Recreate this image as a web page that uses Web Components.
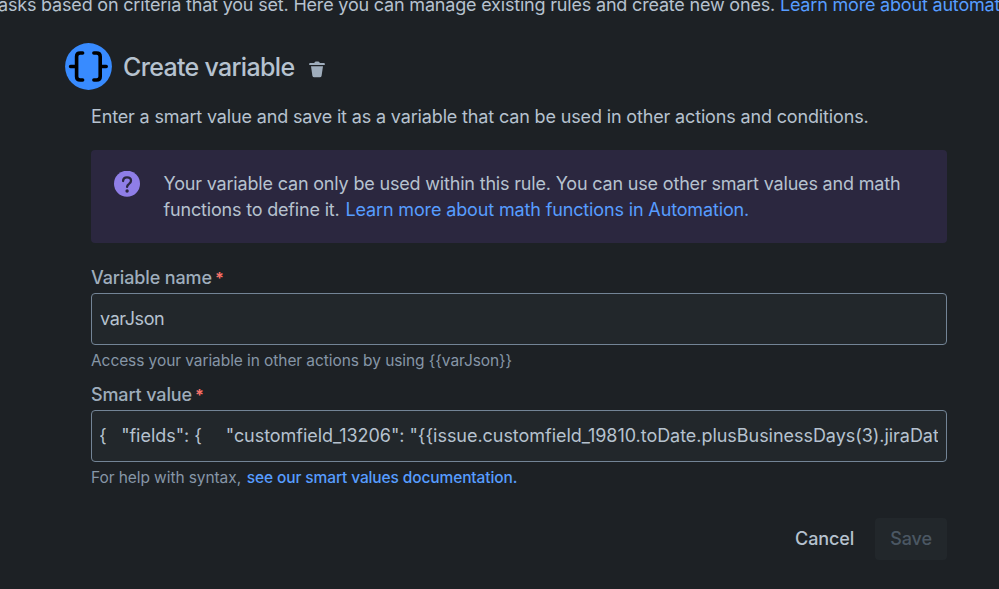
<!DOCTYPE html>
<html lang="en"><head><meta charset="utf-8"><title>Create variable</title>
<style>
html,body{margin:0;height:100%;overflow:hidden;background:#1d2125}
body{font:400 18px/26px Inter,"Noto Sans",sans-serif;color:#b6c2cf;letter-spacing:-.15px}
</style></head><body>
<automation-page></automation-page>
<script>
const define=(name,html,setup)=>customElements.define(name,class extends HTMLElement{
  connectedCallback(){
    if(this.shadowRoot)return;
    const t=document.createElement('template');t.innerHTML=html;
    const root=this.attachShadow({mode:'open'});root.append(t.content.cloneNode(true));
    if(setup)setup(this,root);
  }
});

define('text-link',`<style>:host{display:inline;color:#579dff}a{color:inherit;text-decoration:none}</style><a href="#"><slot></slot></a>`);

define('variable-icon',`<style>:host{display:block;width:47px;height:47px;flex:none}svg{display:block}</style>
<svg width="47" height="47" viewBox="0 0 47 47"><circle cx="23.5" cy="23.5" r="23.4" fill="#388bff"/>
<g fill="none" stroke="#000" stroke-width="3.6" stroke-linecap="round" stroke-linejoin="round"><path d="M17.6 10H15.2Q11.6 10 11.6 13.6V33.4Q11.6 37 15.2 37H17.6M5.6 23.5H11.6"/><path d="M28.9 10H31.6Q35.2 10 35.2 13.6V33.4Q35.2 37 31.6 37H28.9M35.2 23.5H41.2"/></g></svg>`);

define('trash-button',`<style>:host{display:block;width:16px;height:17px}button{all:unset;display:block}svg{display:block}</style>
<button aria-label="Delete"><svg width="16" height="17" viewBox="0 0 16 17" fill="#9fadbc"><path d="M1.1 2H5.3Q5.6.5 6.8.5H9.3Q10.5.5 10.8 2H15Q15.8 2 15.8 2.8V4H.2V2.8Q.2 2 1.1 2Z"/><path d="M2 5.3H14L12.6 14.8Q12.3 16.3 10.8 16.3H5.2Q3.7 16.3 3.4 14.8Z"/></svg></button>`);

define('rule-heading',`<style>:host{display:flex;align-items:center;height:47px}
h1{margin:1px 0 0 11px;font-size:25px;line-height:30px;font-weight:550;letter-spacing:-.68px;white-space:nowrap}
trash-button{margin:6px 0 0 15px}</style>
<variable-icon></variable-icon><h1><slot></slot></h1><trash-button></trash-button>`);

define('info-banner',`<style>:host{display:flex;box-sizing:border-box;height:93px;padding:21px 23px;border-radius:4px;background:#2b273f}
svg{flex:none;width:26px;height:26px;margin-right:23.5px}div{flex:1;letter-spacing:-.18px;white-space:nowrap}</style>
<svg viewBox="0 0 26 26"><circle cx="13" cy="12.7" r="13" fill="#8f7ee7"/><path d="M9.1 10.1Q9.1 6.3 13 6.3Q17 6.3 17 9.8Q17 11.6 15 12.9Q13.1 14 13.1 15.9" fill="none" stroke="#2b273f" stroke-width="2.3" stroke-linecap="round"/><circle cx="13.1" cy="20" r="1.7" fill="#2b273f"/></svg><div><slot></slot></div>`);

define('form-field',`<style>:host{display:block}
label{display:block;height:29px;font-weight:500;color:#9fadbc;line-height:27px;letter-spacing:-.13px}
i{font-style:normal;font-weight:700;font-size:16px;color:#f87168;margin-left:3px}
.box{box-sizing:border-box;height:52px;border:1.3px solid #738496;border-radius:4px;background:#22272b;padding:0 8px;overflow:hidden}
.value{line-height:50px;overflow:hidden;white-space:pre;letter-spacing:-.04px}
.help{height:20px;margin-top:6px;font-size:15.5px;line-height:20px;color:#8696a7;letter-spacing:-.08px}</style>
<label></label><div class="box"><div class="value"><slot name="value"></slot></div></div><div class="help"><slot></slot></div>`,(el,root)=>{
  const l=root.querySelector('label'),i=document.createElement('i');i.textContent='*';l.append(el.getAttribute('label'),i);
});

define('action-button',`<style>:host{display:block}button{all:unset;box-sizing:border-box;height:42px;padding:0 15px;border-radius:4px;font-weight:550;line-height:42px;letter-spacing:-.1px;color:#b6c2cf}
:host([disabled]) button{background:#22272b;color:#4b5763}</style><button><slot></slot></button>`);

define('automation-page',`<style>
:host{display:block;box-sizing:border-box;width:999px;height:589px;overflow:hidden;background:#1d2125}
.intro{height:43px;white-space:nowrap;letter-spacing:-.19px}
.intro p{margin:0;transform:translate(-2px,-8px)}
rule-heading{margin-left:65px}
.form{width:856px;margin-left:91px;padding-top:14px}
.desc{margin:0 0 20px;white-space:nowrap}
info-banner text-link{letter-spacing:-.14px;margin-left:1px}
form-field.name{margin-top:21px}
form-field.smart{margin-top:10px}
.code{display:inline-flex;transform:translateX(-1px)}
.gap1{margin-left:14.5px}.gap2{margin-left:24px}
.help-link{font-weight:500;letter-spacing:-.12px;margin-left:1.5px}
.vj{letter-spacing:-.4px}
.actions{display:flex;justify-content:flex-end;gap:6px;margin-top:30px}
</style>
<div class="intro"><p>asks based on criteria that you set. Here you can manage existing rules and create new ones. <text-link>Learn more about automat</text-link></p></div>
<rule-heading>Create variable</rule-heading>
<div class="form">
<p class="desc">Enter a smart value and save it as a variable that can be used in other actions and conditions.</p>
<info-banner>Your variable can only be used within this rule. You can use other smart values and math<br>functions to define it. <text-link>Learn more about math functions in Automation.</text-link></info-banner>
<form-field class="name" label="Variable name"><span slot="value" class="vj">varJson</span>Access your variable in other actions by using {{varJson}}</form-field>
<form-field class="smart" label="Smart value"><span slot="value" class="code"><span>{</span><span class="gap1">"fields": {</span><span class="gap2">"customfield_13206": "{{issue.customfield_19810.toDate.plusBusinessDays(3).jiraDat</span></span>For help with syntax, <text-link class="help-link">see our smart values documentation.</text-link></form-field>
<div class="actions"><action-button>Cancel</action-button><action-button disabled>Save</action-button></div>
</div>`);
</script></body></html>
